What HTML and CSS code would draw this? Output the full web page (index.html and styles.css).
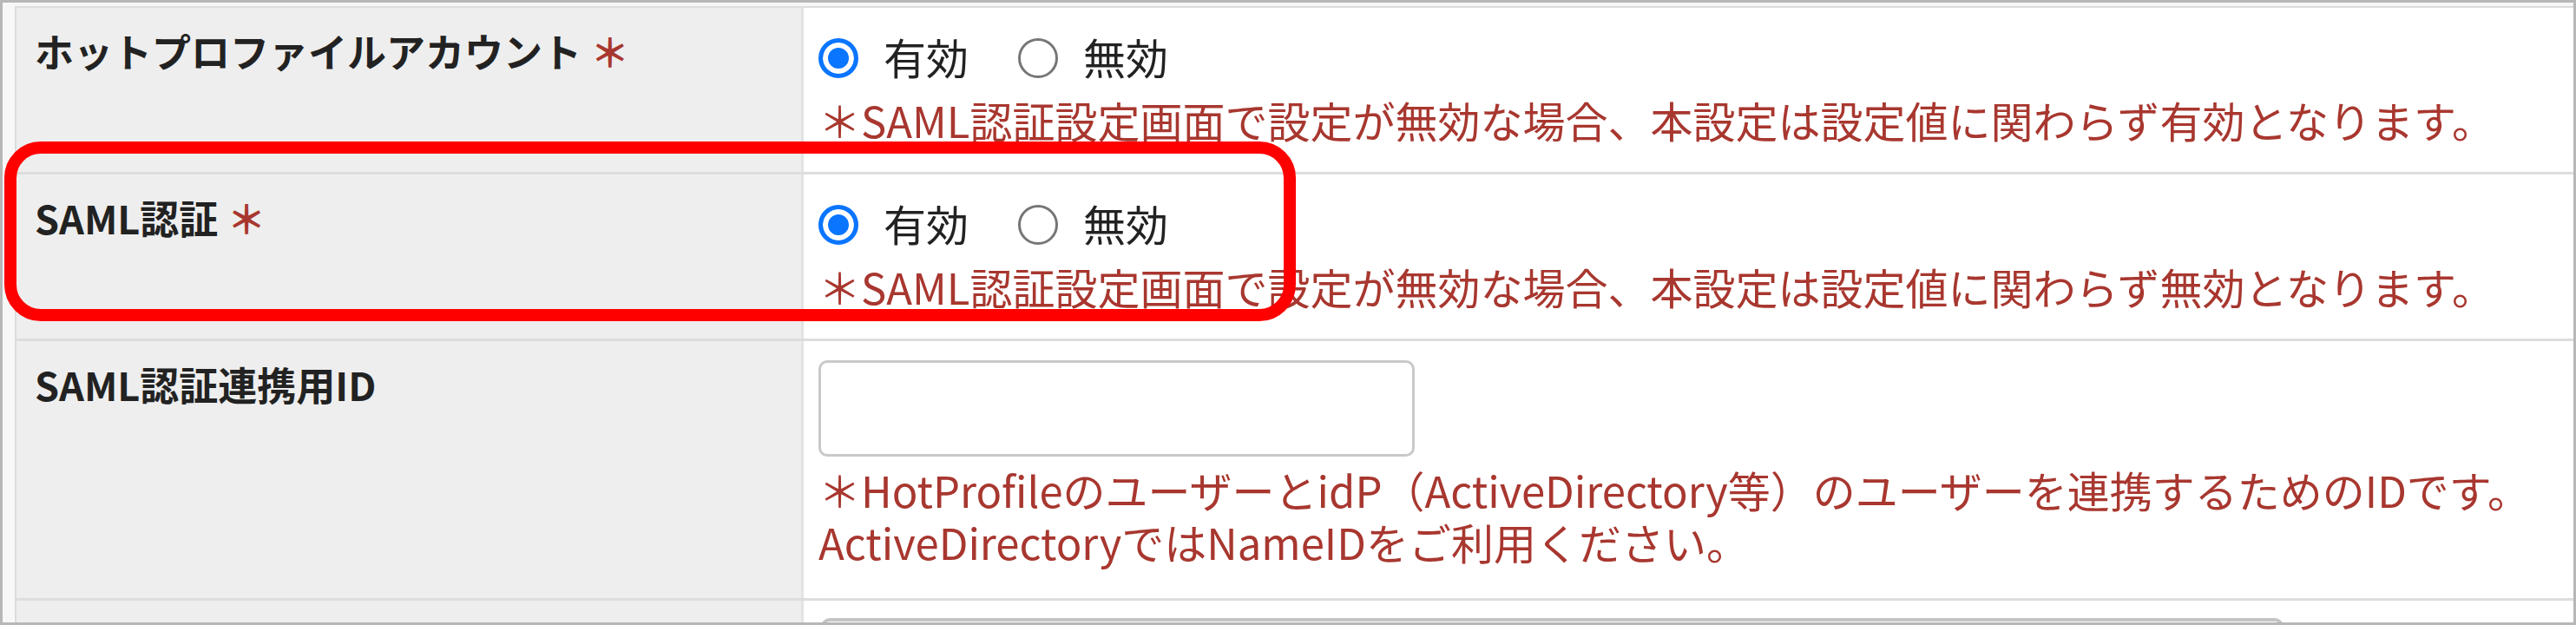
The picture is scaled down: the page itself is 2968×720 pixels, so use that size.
FILE: index.html
```html
<!DOCTYPE html>
<html lang="ja">

<head>
    <meta charset="UTF-8">
    <title>SAML認証設定</title>
    <link rel="stylesheet" href="styles.css">
</head>

<body>

    <div class="frame">
        <div class="form-table">

            <!-- ホットプロファイルアカウント -->
            <div class="row">
                <div class="label">ホットプロファイルアカウント <span class="req">＊</span></div>
                <div class="value">
                    <div class="radios">
                        <label class="radio"><input type="radio" name="hot" checked><span>有効</span></label>
                        <label class="radio"><input type="radio" name="hot"><span>無効</span></label>
                    </div>
                    <p class="note">＊SAML認証設定画面で設定が無効な場合、本設定は設定値に関わらず有効となります。</p>
                </div>
            </div>

            <!-- SAML認証 -->
            <div class="row">
                <div class="label">SAML認証 <span class="req">＊</span></div>
                <div class="value">
                    <div class="radios">
                        <label class="radio"><input type="radio" name="saml" checked><span>有効</span></label>
                        <label class="radio"><input type="radio" name="saml"><span>無効</span></label>
                    </div>
                    <p class="note">＊SAML認証設定画面で設定が無効な場合、本設定は設定値に関わらず無効となります。</p>
                </div>
            </div>

            <!-- SAML認証連携用ID -->
            <div class="row row-id">
                <div class="label">SAML認証連携用ID</div>
                <div class="value">
                    <input type="text" class="text-input">
                    <p class="note note-tight">＊HotProfileのユーザーとidP（ActiveDirectory等）のユーザーを連携するためのIDです。<br>ActiveDirectoryではNameIDをご利用ください。</p>
                </div>
            </div>

            <!-- next row, cut off by the frame -->
            <div class="row">
                <div class="label"></div>
                <div class="value">
                    <div class="wide-input"></div>
                </div>
            </div>

        </div>

        <!-- red highlight around the SAML row -->
        <div class="highlight"></div>
    </div>

</body>

</html>
```

FILE: styles.css
```css
/* General Reset */
* {
    margin: 0;
    padding: 0;
    box-sizing: border-box;
}

body {
    background-color: #ffffff;
    font-family: "Noto Sans CJK JP", "Noto Sans", sans-serif;
}

/* Outer frame of the screenshot */
.frame {
    position: relative;
    height: 720px;
    border: 3px solid #b7b7b7;
    padding: 4px 0 0 14px;
    background-color: #f7f7f7;
    overflow: hidden;
}

.form-table {
    border-top: 2px solid #dcdcdc;
    border-left: 2px solid #dcdcdc;
}

.row {
    display: grid;
    grid-template-columns: 907px 1fr;
    border-bottom: 3px solid #dddddd;
}

/* Label column */
.label {
    background-color: #eeeeee;
    border-right: 3px solid #e3e3e3;
    padding: 20px 0 0 21px;
    font-size: 45px;
    line-height: 60px;
    font-weight: bold;
    color: #222222;
}

.req {
    color: #a8372f;
}

/* Value column */
.value {
    background-color: #ffffff;
    padding: 26px 0 30px 17px;
}

.radios {
    display: flex;
    align-items: center;
    height: 60px;
}

.radio {
    display: flex;
    align-items: center;
    gap: 29px;
    margin-right: 57px;
    font-size: 49px;
    line-height: 60px;
    color: #222222;
}

.radio input {
    appearance: none;
    -webkit-appearance: none;
    width: 46px;
    height: 46px;
    border: 3px solid #767676;
    border-radius: 50%;
    background-color: #ffffff;
    margin: 4px 0 0 0;
}

.radio input:checked {
    border: 5px solid #0a75ff;
    background-color: #0a75ff;
    box-shadow: inset 0 0 0 6px #ffffff;
}

.note {
    margin-top: 13px;
    font-size: 49px;
    line-height: 60px;
    color: #a8372f;
    white-space: nowrap;
}

/* ID row */
.row-id .value {
    padding: 22px 0 35px 17px;
}

.text-input {
    display: block;
    width: 687px;
    height: 111px;
    border: 3px solid #c9c9c9;
    border-radius: 10px;
    background-color: #ffffff;
}

.note-tight {
    margin-top: 8px;
}

.wide-input {
    width: 1685px;
    height: 100px;
    border: 4px solid #c4c4c4;
    border-radius: 10px;
    margin-left: 3px;
    margin-top: -6px;
}

/* Red box drawn over the SAML row */
.highlight {
    position: absolute;
    left: 2px;
    top: 160px;
    width: 1488px;
    height: 207px;
    border: 14px solid #ff0000;
    border-radius: 42px;
    pointer-events: none;
}
```
